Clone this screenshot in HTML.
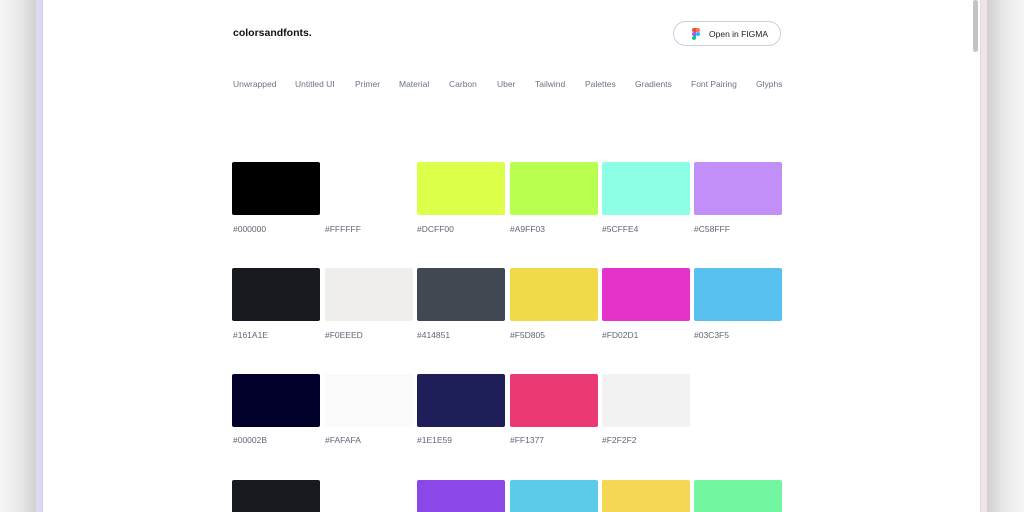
<!DOCTYPE html>
<html style="width:1024px;height:512px;overflow:hidden"><head><style>
*{margin:0;padding:0;box-sizing:border-box}
body{width:1024px;height:512px;overflow:hidden;background:#fff;font-family:"Liberation Sans",Arial,sans-serif;position:relative}
.shl{position:absolute;left:0;top:0;width:37px;height:512px;background:linear-gradient(90deg,#f6f6f6,#e6e6e6 60%,#cfcfcf)}
.lav{position:absolute;left:36px;top:0;width:7px;height:512px;background:#dcdaf0;border-right:1px solid #cfcde8}
.shr{position:absolute;left:987px;top:0;width:37px;height:512px;background:linear-gradient(90deg,#cfcfcf,#e6e6e6 40%,#f6f6f6)}
.pink{position:absolute;left:980px;top:0;width:7px;height:512px;background:#f1e4e6;border-left:1px solid #e6d6d8}
.thumb{position:absolute;left:973px;top:0;width:5px;height:52px;background:#c3c3c3;border-radius:3px}
.logo{position:absolute;left:233px;top:27px;font-size:10.5px;font-weight:bold;color:#111}
.btn{position:absolute;left:673px;top:21px;width:108px;height:25px;border:1px solid #c9d0de;border-radius:13px;font-size:8.5px;color:#222}
.btn span{position:absolute;left:35px;top:7px}
.nav{position:absolute;top:79px;font-size:8.5px;color:#6b7384}
.sw{position:absolute;width:88px;height:53px;border-radius:2px}
.lb{position:absolute;font-size:8.5px;color:#5f6676}
</style></head><body>
<div class="shl"></div><div class="lav"></div>
<div class="pink"></div><div class="shr"></div><div class="thumb"></div>
<div class="logo">colorsandfonts.</div>
<div class="btn">
<svg style="position:absolute;left:18px;top:6px" width="8" height="12" viewBox="0 0 8 12">
<rect x="0" y="0" width="4" height="4" rx="2" fill="#f24e1e"/><rect x="2" y="0" width="2" height="4" fill="#f24e1e"/>
<rect x="4" y="0" width="4" height="4" rx="2" fill="#ff7262"/><rect x="4" y="0" width="2" height="4" fill="#ff7262"/>
<rect x="0" y="4" width="4" height="4" rx="2" fill="#a259ff"/><rect x="2" y="4" width="2" height="4" fill="#a259ff"/>
<circle cx="6" cy="6" r="2" fill="#1abcfe"/>
<rect x="0" y="8" width="4" height="4" rx="2" fill="#0acf83"/><rect x="2" y="8" width="2" height="2" fill="#0acf83"/>
</svg><span>Open in FIGMA</span></div>
<div class="nav" style="left:233px">Unwrapped</div>
<div class="nav" style="left:295px">Untitled UI</div>
<div class="nav" style="left:355px">Primer</div>
<div class="nav" style="left:399px">Material</div>
<div class="nav" style="left:449px">Carbon</div>
<div class="nav" style="left:497px">Uber</div>
<div class="nav" style="left:535px">Tailwind</div>
<div class="nav" style="left:585px">Palettes</div>
<div class="nav" style="left:635px">Gradients</div>
<div class="nav" style="left:691px">Font Pairing</div>
<div class="nav" style="left:756px">Glyphs</div>

<div class="sw" style="left:232px;top:162px;background:#000"></div>
<div class="sw" style="left:325px;top:162px;background:#fff"></div>
<div class="sw" style="left:417px;top:162px;background:#dcff4a"></div>
<div class="sw" style="left:510px;top:162px;background:#b9ff4f"></div>
<div class="sw" style="left:602px;top:162px;background:#8cffe4"></div>
<div class="sw" style="left:694px;top:162px;background:#c18ff7"></div>
<div class="lb" style="left:233px;top:224px">#000000</div>
<div class="lb" style="left:325px;top:224px">#FFFFFF</div>
<div class="lb" style="left:417px;top:224px">#DCFF00</div>
<div class="lb" style="left:510px;top:224px">#A9FF03</div>
<div class="lb" style="left:602px;top:224px">#5CFFE4</div>
<div class="lb" style="left:694px;top:224px">#C58FFF</div>

<div class="sw" style="left:232px;top:268px;background:#161a1e"></div>
<div class="sw" style="left:325px;top:268px;background:#f0eeed"></div>
<div class="sw" style="left:417px;top:268px;background:#414851"></div>
<div class="sw" style="left:510px;top:268px;background:#f0da4a"></div>
<div class="sw" style="left:602px;top:268px;background:#e532cb"></div>
<div class="sw" style="left:694px;top:268px;background:#58c1f0"></div>
<div class="lb" style="left:233px;top:330px">#161A1E</div>
<div class="lb" style="left:325px;top:330px">#F0EEED</div>
<div class="lb" style="left:417px;top:330px">#414851</div>
<div class="lb" style="left:510px;top:330px">#F5D805</div>
<div class="lb" style="left:602px;top:330px">#FD02D1</div>
<div class="lb" style="left:694px;top:330px">#03C3F5</div>

<div class="sw" style="left:232px;top:374px;background:#00002b"></div>
<div class="sw" style="left:325px;top:374px;background:#fafafa"></div>
<div class="sw" style="left:417px;top:374px;background:#1e1e59"></div>
<div class="sw" style="left:510px;top:374px;background:#eb3a73"></div>
<div class="sw" style="left:602px;top:374px;background:#f2f2f2"></div>
<div class="lb" style="left:233px;top:435px">#00002B</div>
<div class="lb" style="left:325px;top:435px">#FAFAFA</div>
<div class="lb" style="left:417px;top:435px">#1E1E59</div>
<div class="lb" style="left:510px;top:435px">#FF1377</div>
<div class="lb" style="left:602px;top:435px">#F2F2F2</div>

<div class="sw" style="left:232px;top:480px;background:#161a1e"></div>
<div class="sw" style="left:417px;top:480px;background:#8c47e8"></div>
<div class="sw" style="left:510px;top:480px;background:#5ccbea"></div>
<div class="sw" style="left:602px;top:480px;background:#f5d655"></div>
<div class="sw" style="left:694px;top:480px;background:#72f7a0"></div>
</body></html>
